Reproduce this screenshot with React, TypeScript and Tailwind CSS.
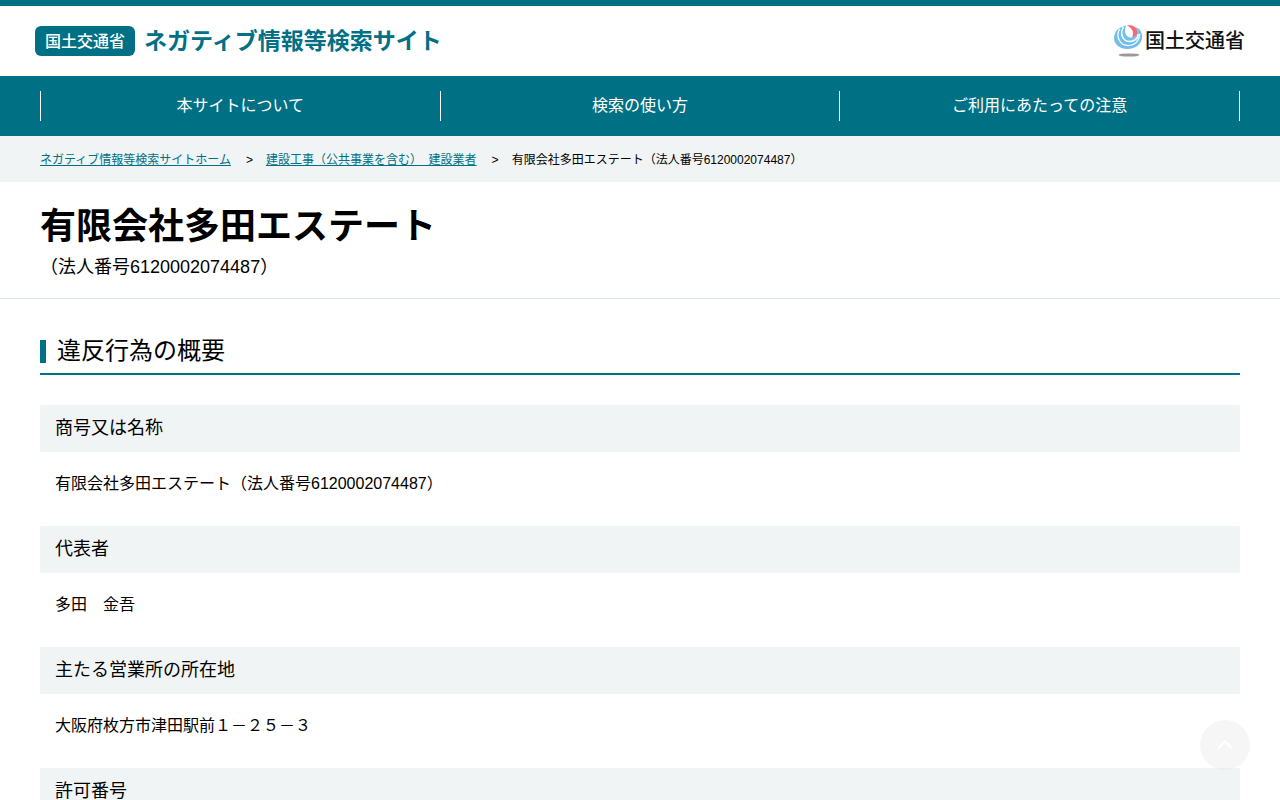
const navItems = ['本サイトについて', '検索の使い方', 'ご利用にあたっての注意']

const company = '有限会社多田エステート'
const corporateNumber = '（法人番号6120002074487）'

const details = [
  { term: '商号又は名称', value: `${company}${corporateNumber}` },
  { term: '代表者', value: '多田　金吾' },
  { term: '主たる営業所の所在地', value: '大阪府枚方市津田駅前１－２５－３' },
  { term: '許可番号', value: '' },
]

function MinistryMark() {
  return (
    <svg width="28" height="32" viewBox="0 0 28 32" aria-hidden="true">
      {/* outer crescent */}
      <path d="M8 2C3 3.500 0 8 0 13C0 19.500 6 24 13.500 24C21.500 24 28 19 28 12C28 8.500 27 6 25 4L8 2Z" fill="#72bfeb" />
      <path d="M9 1.500Q17 -2 25 4C27 10 22 15 16 15C9 15 6 8 9 1.500Z" fill="#72bfeb" />
      {/* gaps between the crescents */}
      <path d="M5.500 4C1.500 12 6 20.500 14 20.500C20.500 20.500 25.500 16 25.500 9" fill="none" stroke="#fff" strokeWidth="1.200" />
      <path d="M9.500 2C5.500 9 9 16.500 15.500 16.500C20 16.500 23.500 13.500 24.500 9" fill="none" stroke="#fff" strokeWidth="1.400" />
      <path d="M12 1C9.500 7 12 12.500 17 12.500C21 12.500 24 9.500 23.500 5L20 0L12 0Z" fill="#fff" />
      <path d="M13 0.500C18 -0.500 23.500 2 23.500 7C23.500 10 21 12 18 12C19.500 10 19.500 6.500 17.500 4C16.500 2.500 14.500 1.200 13 0.500Z" fill="#f06a7a" />
      <ellipse cx="15" cy="30" rx="10.500" ry="1.600" fill="#999" />
    </svg>
  )
}

function Header() {
  return (
    <header className="border-t-6 border-[#007085]">
      <div className="flex h-[70px] items-center justify-between px-[35px]">
        <a href="#" className="flex items-center gap-[9px] font-['Noto_Sans_CJK_JP',sans-serif] text-[#007085]">
          <span className="h-[30px] rounded-md bg-[#007085] px-[10px] text-base leading-7 font-medium text-white">
            国土交通省
          </span>
          <span className="pb-1 text-[23px] leading-[30px] font-bold">ネガティブ情報等検索サイト</span>
        </a>
        <a
          href="#"
          className="flex items-center gap-[3px] font-['Noto_Sans_CJK_JP',sans-serif] text-xl leading-6 font-medium text-[#111]"
        >
          <MinistryMark />
          <span className="pb-[2px]">国土交通省</span>
        </a>
      </div>
    </header>
  )
}

function GlobalNav() {
  return (
    <nav className="bg-[#007085] px-10 py-[15px]">
      <ul className="flex border-l border-white">
        {navItems.map((item) => (
          <li key={item} className="flex-1 border-r border-white text-center">
            <a href="#" className="block text-base leading-[30px] text-white">
              {item}
            </a>
          </li>
        ))}
      </ul>
    </nav>
  )
}

function Breadcrumb() {
  return (
    <nav aria-label="パンくず" className="bg-[#f0f4f5] px-10 pt-[15px] pb-[13px]">
      <ol className="flex text-xs leading-[18px]">
        <li>
          <a href="#" className="text-[#007085] underline">
            ネガティブ情報等検索サイトホーム
          </a>
          <span className="mr-[13px] ml-[15px]">&gt;</span>
        </li>
        <li>
          <a href="#" className="text-[#007085] underline">
            建設工事（公共事業を含む） &nbsp;建設業者
          </a>
          <span className="mr-[13px] ml-[15px]">&gt;</span>
        </li>
        <li>
          {company}
          {corporateNumber}
        </li>
      </ol>
    </nav>
  )
}

function PageTopButton() {
  return (
    <button
      type="button"
      aria-label="ページの先頭へ"
      className="fixed right-[30px] bottom-[30px] flex size-[50px] items-center justify-center rounded-full bg-[#e1e1e1]/30"
    >
      <svg width="16" height="10" viewBox="0 0 16 10" fill="none" stroke="#fff" strokeWidth="2">
        <path d="M1 8.500L8 1.500L15 8.500" />
      </svg>
    </button>
  )
}

export default function App() {
  return (
    <div className="bg-white font-['Liberation_Sans','Noto_Sans_CJK_JP',sans-serif] text-black">
      <Header />
      <GlobalNav />
      <Breadcrumb />
      <div className="border-b border-[#dbe3e4] px-10 pt-[18px] pb-[17px]">
        <h1 className="text-4xl leading-[54px] font-bold">{company}</h1>
        <p className="text-lg leading-[27px]">{corporateNumber}</p>
      </div>
      <main className="px-10 pt-[34px]">
        <h2 className="flex items-center gap-[11px] border-b-2 border-[#007085] pb-1 text-2xl leading-9">
          <span className="h-[23px] w-[6px] bg-[#007085]" />
          違反行為の概要
        </h2>
        <dl className="mt-[30px]">
          {details.map((detail) => (
            <div key={detail.term}>
              <dt className="bg-[#f0f4f5] px-[15px] py-[10px] text-lg leading-[27px]">{detail.term}</dt>
              {detail.value && <dd className="px-[15px] pt-5 pb-[30px] text-base">{detail.value}</dd>}
            </div>
          ))}
        </dl>
      </main>
      <PageTopButton />
    </div>
  )
}
